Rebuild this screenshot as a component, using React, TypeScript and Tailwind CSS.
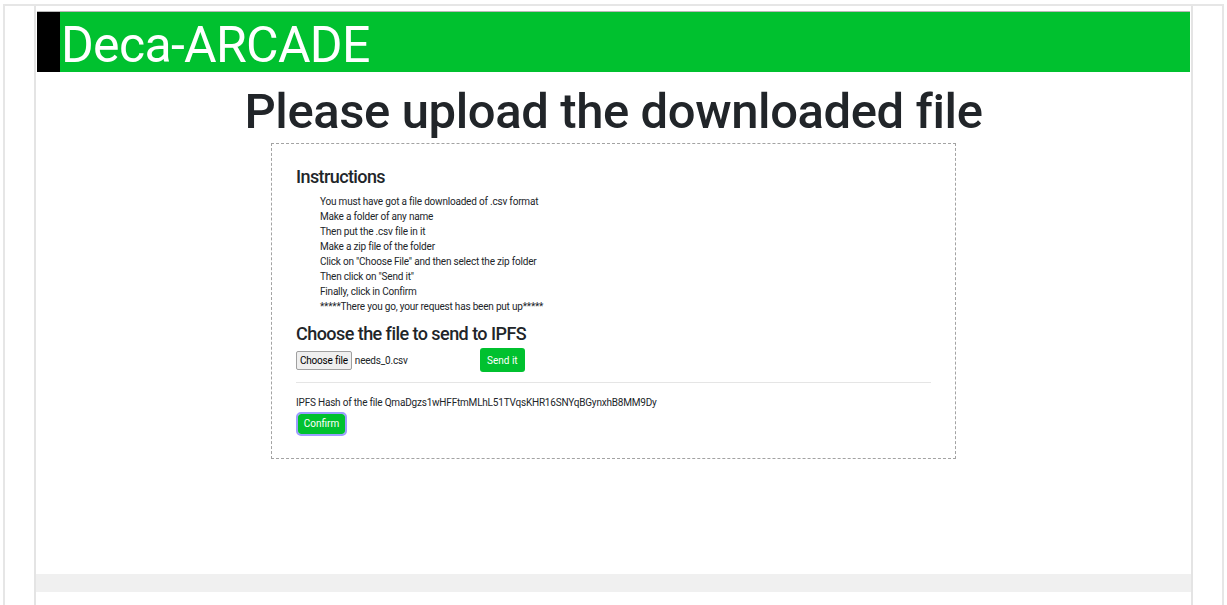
import React from 'react'

const steps = [
  'You must have got a file downloaded of .csv format',
  'Make a folder of any name',
  'Then put the .csv file in it',
  'Make a zip file of the folder',
  'Click on "Choose File" and then select the zip folder',
  'Then click on "Send it"',
  'Finally, click in Confirm',
  '*****There you go, your request has been put up*****',
]

export default function App() {
  return (
    <div className="min-h-[605px] bg-white px-[3px] pt-[4px] font-['Roboto','Liberation_Sans',sans-serif] text-[#212529]">
      <div className="h-[601px] border-x-2 border-t-2 border-[#e6e6e6]">
        <div className="ml-[29px] flex h-full w-[1159px] flex-col border-x-2 border-[#e4e4e4]">
          {/* Brand bar */}
          <header className="mt-[5px] ml-[1px] mr-px flex h-[61px] border-t border-[#b8b8b8] bg-[#00c12f]">
            <div className="w-[23px] bg-black" />
            <h1 className="pt-[3px] pl-[1px] text-[50px] leading-[60px] font-normal tracking-[-0.7px] text-white">
              Deca-ARCADE
            </h1>
          </header>

          <main className="flex flex-1 flex-col items-center">
            <h2 className="mt-[10px] text-[49px] leading-[60px] font-medium tracking-[-0.4px]">
              Please upload the downloaded file
            </h2>

            <section className="mt-[1px] w-[685px] border border-dashed border-[#a3a3a3] px-[24px] pt-[21px] pb-[24px]">
              <h4 className="text-[18px] leading-[24px] font-medium tracking-[-0.6px]">Instructions</h4>
              <ul className="mt-[5px] pl-[24px] text-[10px] leading-[15px] tracking-[-0.2px]">
                {steps.map((s) => (
                  <li key={s}>{s}</li>
                ))}
              </ul>

              <h4 className="mt-[8px] text-[18px] leading-[24px] font-medium tracking-[-0.55px]">
                Choose the file to send to IPFS
              </h4>
              <div className="mt-[2px] flex items-center">
                <div className="flex w-[184px] items-center">
                  <button className="h-[19px] rounded-[2px] border border-[#a0a0a0] bg-[#efefef] px-[3px] text-[10px] leading-[17px] tracking-[-0.2px] text-black">
                    Choose file
                  </button>
                  <span className="ml-[3px] text-[10px] tracking-[-0.2px]">needs_0.csv</span>
                </div>
                <button className="h-[24px] rounded-[3px] bg-[#00c12f] px-[7px] text-[10px] text-white">Send it</button>
              </div>

              <hr className="mt-[10px] border-t border-[#e5e5e5]" />

              <p className="mt-[12px] text-[10px] leading-[15px] tracking-[-0.2px]">
                IPFS Hash of the file QmaDgzs1wHFFtmMLhL51TVqsKHR16SNYqBGynxhB8MM9Dy
              </p>
              <button className="mt-[2px] ml-[2px] h-[20px] w-[47px] rounded-[3px] bg-[#00c12f] text-[10px] text-white outline-2 outline-[#9c9cff]">
                Confirm
              </button>
            </section>
          </main>

          <div className="mb-[13px] h-[18px] bg-[#f0f0f0]" />
        </div>
      </div>
    </div>
  )
}
